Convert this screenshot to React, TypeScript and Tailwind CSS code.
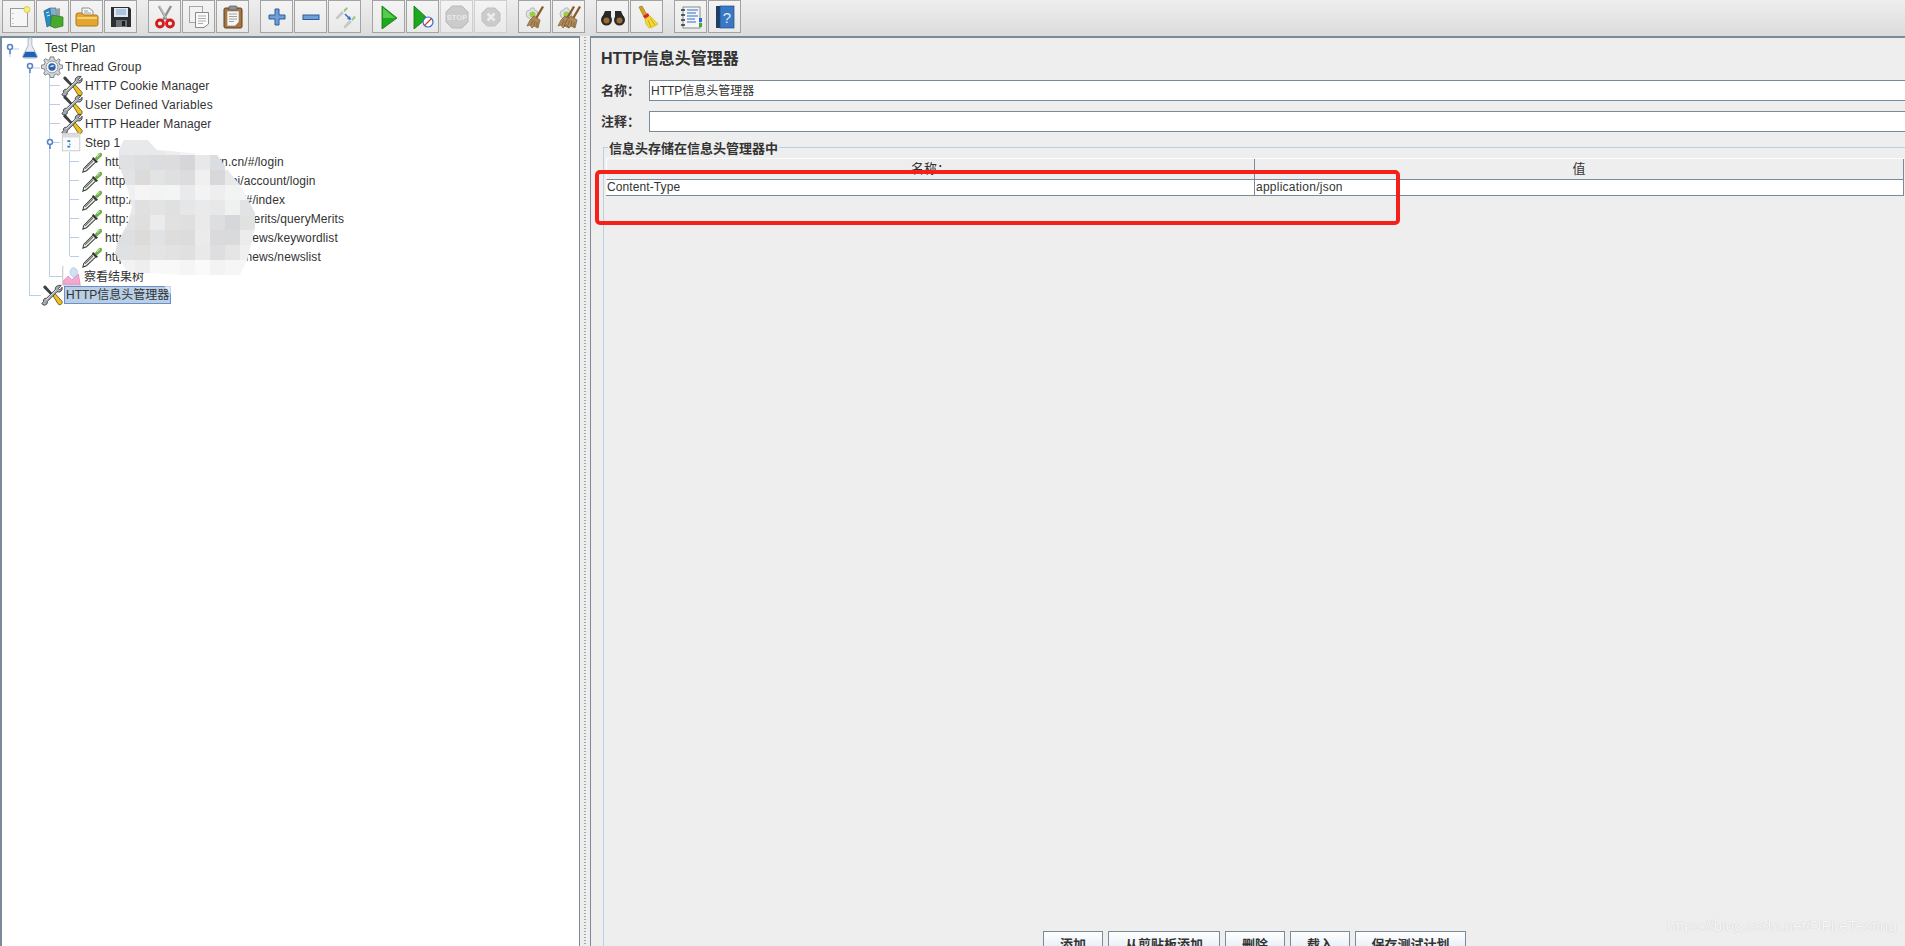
import type { ReactNode } from 'react';

const CJK = "font-['Liberation_Sans','Noto_Sans_CJK_SC',sans-serif]";

function Ic({ children, size = 24 }: { children: ReactNode; size?: number }) {
  return (
    <svg width={size} height={size} viewBox="0 0 24 24" className="block shrink-0">
      {children}
    </svg>
  );
}

// pipette, also used at small size in the tree
const dropper = (
  <>
    <path d="M2 23 L3 19 L13 9 L16 12 L6 21.5 Z" fill="#f0f2f0" stroke="#3a3f3a" strokeWidth="1.1" />
    <path d="M4.5 19.5 L13 11" stroke="#6d726d" strokeWidth="1.2" />
    <path d="M12 8 L17 13 L18.5 11.5 L13.5 6.5 Z" fill="#2f352c" />
    <path d="M15 8 L19 3 Q21 1 22.5 2.5 Q24 5 21 7 L17 10.5 Z" fill="#6fae4a" />
    <path d="M17.5 6.5 L20.5 3.2" stroke="#bfe0a2" strokeWidth="1.2" />
  </>
);

const wrench = (
  <>
    <path d="M3 2 L5 1.5 L13 10.5 L11 12.5 L2.5 4 Z" fill="#3c4043" />
    <path d="M12 11 L14.5 9.5 L23 19 Q23.5 21.5 21.5 22.5 Q19.5 23 18.5 21.5 Z" fill="#f0c11d" stroke="#5f4c10" strokeWidth="0.9" />
    <path d="M22 1.5 L19 5 L20.5 6.5 L23 3.5 Q23.8 7 21 8.5 Q19 9 17.5 8.5 L7 19 Q7.5 22 4.5 23 Q2 23.5 1 21.5 Q1 20.5 3 19 L2.5 17.5 Q3.5 15 6 15.5 L15.5 6.5 Q15 4 17 2.5 Q19 1 22 1.5 Z" fill="#a5abaf" stroke="#2e3235" strokeWidth="0.9" />
    <path d="M5.5 17.5 L16.5 6.5" stroke="#eceef0" strokeWidth="0.9" />
  </>
);

const gear = (
  <>
    <path d="M12 1 L14 1 L14.5 4 L17 5 L19.5 3 L21 4.5 L19.5 7 L20.5 9.5 L23.5 10 L23.5 13.5 L20.5 14 L19.5 16.5 L21 19 L19 21 L16.5 19.5 L14.5 20.5 L14 23.5 L10 23.5 L9.5 20.5 L7 19.5 L4.5 21 L3 19 L4.5 16.5 L3.5 14 L0.5 13.5 L0.5 10 L3.5 9.5 L4.5 7 L3 4.5 L5 3 L7.5 4.5 L9.5 4 L10 1 Z" fill="#d5d8dc" stroke="#73797f" strokeWidth="1" />
    <circle cx="12" cy="12" r="6.5" fill="#f2f3f5" stroke="#8c9298" />
    <circle cx="12" cy="12" r="4" fill="#2f62a6" />
    <path d="M9.5 12 Q12 8 15 11 L12 12 Z" fill="#cfe0f5" />
  </>
);

const broom = (
  <>
    <path d="M19 1 L21 2 L14 14 L12 13 Z" fill="#8a5a2b" />
    <path d="M11 11 L17 15 L15 23 L11 21 L9 23 L7 20 L4 21 L7 15 Z" fill="#b08a5a" stroke="#7d5c34" strokeWidth="0.7" />
    <path d="M10 15 L8 20 M12 16 L11 21 M14 17 L14 22" stroke="#7d5c34" strokeWidth="0.8" />
  </>
);

const smallGear = (
  <>
    <path d="M8 3 L11 3 L11.5 5 L14 6 L15 9 L14 12 L11.5 13.5 L11 15 L8 15 L7 13.5 L4 12 L3 9 L4 6 L7 5 Z" fill="#dfe1e3" stroke="#b5b8bb" strokeWidth="1" />
    <circle cx="9.5" cy="9.5" r="3" fill="#9ccb45" />
  </>
);

const toolbarIcons: { x: ReactNode; off?: boolean; gap?: boolean }[] = [
  {
    x: (
      <Ic>
        <rect x="3.5" y="3.5" width="17" height="18" fill="#f6f6f6" stroke="#9a9a9a" />
        <path d="M6 8 V9 M6 13 V14 M6 18 V19" stroke="#999" />
        <circle cx="20" cy="4.5" r="3" fill="#f4ee8a" stroke="#e0cf3c" />
      </Ic>
    ),
  },
  {
    x: (
      <Ic>
        <path d="M3 6 L9 3 L11 19 L6 22 Z" fill="#2a8ac8" stroke="#155a8a" strokeWidth="0.7" />
        <path d="M9 3 L15 3 L16 17 L11 19 Z" fill="#7fb0d0" stroke="#4a6e88" strokeWidth="0.7" />
        <path d="M15 4 L19 3 L19 16 L16 17 Z" fill="#999ea3" />
        <path d="M9 21 L11 10 L22 12 L22 21 L14 23 Z" fill="#47a92e" stroke="#2a7a1a" strokeWidth="0.7" />
        <path d="M5 8 L8 7 M6 11 L9 10" stroke="#d0ecff" />
      </Ic>
    ),
  },
  {
    x: (
      <Ic>
        <path d="M7 11 V3 H14 L18 6 V11 Z" fill="#f4f4f4" stroke="#909090" />
        <path d="M9 6 H13 M9 8 H16" stroke="#a0a0a0" />
        <path d="M1 10 Q1 8 3 8 H7 L9 10 H21 Q23 10 23 12 V19 Q23 21 21 21 H3 Q1 21 1 19 Z" fill="#e3a72f" stroke="#ab7a1a" />
        <path d="M2 13 H22" stroke="#f6d277" strokeWidth="2" />
      </Ic>
    ),
  },
  {
    x: (
      <Ic>
        <path d="M2 2 H20 L22 4 V22 H2 Z" fill="#2b2f33" />
        <rect x="5" y="3" width="14" height="9" fill="#dfe8f2" />
        <path d="M7 5 H17 M7 7 H17 M7 9 H17" stroke="#7f9fc4" />
        <rect x="7" y="15" width="11" height="7" fill="#6b7075" />
        <rect x="13" y="16" width="3" height="5" fill="#1d1f22" />
      </Ic>
    ),
  },
  {
    gap: true,
    x: (
      <Ic>
        <path d="M6 1 L14 15 M18 1 L10 15" stroke="#8f8f8f" strokeWidth="2.4" />
        <path d="M6.5 1 L13 13" stroke="#e6e6e6" strokeWidth="0.8" />
        <circle cx="7" cy="18.5" r="3.5" fill="none" stroke="#d41a1a" strokeWidth="2.8" />
        <circle cx="17" cy="18.5" r="3.5" fill="none" stroke="#d41a1a" strokeWidth="2.8" />
      </Ic>
    ),
  },
  {
    x: (
      <Ic>
        <rect x="2.5" y="1.5" width="13" height="16" fill="#f2f2f2" stroke="#a5a5a5" />
        <path d="M8.5 7.5 H21.5 V19 L17 22.5 H8.5 Z" fill="#fafafa" stroke="#8a8a8a" />
        <path d="M11 11 H19 M11 13.5 H19 M11 16 H19 M11 18.5 H16" stroke="#adadad" />
      </Ic>
    ),
  },
  {
    x: (
      <Ic>
        <rect x="3" y="3" width="18" height="20" rx="1.5" fill="#a8763a" stroke="#5e3f1a" />
        <path d="M6 6 H18 V17 L14 21 H6 Z" fill="#f8f6f0" stroke="#8a8a8a" strokeWidth="0.7" />
        <rect x="8" y="1" width="8" height="4" rx="1" fill="#8f9396" stroke="#55585a" strokeWidth="0.7" />
        <path d="M8 9 H16 M8 11.5 H16 M8 14 H16 M8 16.5 H13" stroke="#a0a0a0" />
      </Ic>
    ),
  },
  {
    gap: true,
    x: (
      <Ic>
        <path d="M10 4 H14 V10 H20 V14 H14 V20 H10 V14 H4 V10 H10 Z" fill="#6f9fd8" stroke="#2e5c9a" />
      </Ic>
    ),
  },
  {
    x: (
      <Ic>
        <rect x="4" y="10" width="16" height="4.5" fill="#6f9fd8" stroke="#2e5c9a" />
      </Ic>
    ),
  },
  {
    x: (
      <Ic>
        <g transform="translate(0 0) scale(0.55) translate(4 2)">
          <path d="M3 23 L2 21 L12 10 L15 13 L4 23 Z" fill="#c9cdc9" stroke="#8a8f8a" strokeWidth="0.6" />
          <path d="M15 8 L19 3 Q21 1 22.5 3 Q24 5 21 7 L17 11 Z" fill="#9cc77f" />
        </g>
        <g transform="translate(10 10) scale(0.55)">
          <path d="M3 23 L2 21 L12 10 L15 13 L4 23 Z" fill="#c9cdc9" stroke="#8a8f8a" strokeWidth="0.6" />
          <path d="M15 8 L19 3 Q21 1 22.5 3 Q24 5 21 7 L17 11 Z" fill="#9cc77f" />
        </g>
        <path d="M12 9 L17 14" stroke="#2c6fd0" strokeWidth="1.5" />
        <path d="M18 15 L14 14 L17 11 Z" fill="#2c6fd0" />
      </Ic>
    ),
  },
  {
    gap: true,
    x: (
      <Ic>
        <path d="M5 1 L20 13 L5 24 Z" fill="#1ea81e" stroke="#0f700f" strokeWidth="0.8" />
        <path d="M6 3 L18 13 L6 13 Z" fill="#55cc4f" />
      </Ic>
    ),
  },
  {
    x: (
      <Ic>
        <path d="M3 1 L16 13 L3 24 Z" fill="#1ea81e" stroke="#0f700f" strokeWidth="0.8" />
        <circle cx="17" cy="17" r="5" fill="#ffffff" stroke="#2c6fd0" strokeWidth="1.2" />
        <path d="M13.5 20.5 L20.5 13.5" stroke="#e23030" strokeWidth="1.2" />
      </Ic>
    ),
  },
  {
    off: true,
    x: (
      <Ic>
        <path d="M7 1 H17 L23 7 V17 L17 23 H7 L1 17 V7 Z" fill="#c8c8c8" stroke="#b4b4b4" />
        <text x="12" y="15" textAnchor="middle" fontSize="7.5" fontWeight="700" fill="#e8e8e8" fontFamily="Liberation Sans, sans-serif">
          STOP
        </text>
      </Ic>
    ),
  },
  {
    off: true,
    x: (
      <Ic>
        <path d="M8 3 H16 L21 8 V16 L16 21 H8 L3 16 V8 Z" fill="#c8c8c8" stroke="#bcbcbc" />
        <path d="M8.5 8.5 L15.5 15.5 M15.5 8.5 L8.5 15.5" stroke="#ececec" strokeWidth="2.6" />
      </Ic>
    ),
  },
  {
    gap: true,
    x: (
      <Ic>
        {smallGear}
        {broom}
      </Ic>
    ),
  },
  {
    x: (
      <Ic>
        {smallGear}
        <g transform="translate(-3 0)">{broom}</g>
        <g transform="translate(3 0)">{broom}</g>
      </Ic>
    ),
  },
  {
    gap: true,
    x: (
      <Ic>
        <circle cx="5.5" cy="15" r="5.5" fill="#26282a" />
        <circle cx="18.5" cy="15" r="5.5" fill="#26282a" />
        <path d="M4 6 H10 V13 H14 V6 H20 L23 13 H1 Z" fill="#26282a" />
        <circle cx="5.5" cy="15.5" r="3" fill="#a06a34" />
        <circle cx="18.5" cy="15.5" r="3" fill="#a06a34" />
      </Ic>
    ),
  },
  {
    x: (
      <Ic>
        <path d="M4 2 L7 1 L12 10 L9 12 Z" fill="#d8a21e" stroke="#8f6c12" strokeWidth="0.6" />
        <path d="M8 11 L13 8 L14.5 11 L10 14 Z" fill="#d52a2a" />
        <path d="M10 14 L15 11 Q19 15 23 19 Q17 23 14 23 Q10 19 10 14 Z" fill="#f4da35" stroke="#c9a916" strokeWidth="0.6" />
        <path d="M13 15 L16 22 M15 13 L20 20" stroke="#c9a916" />
      </Ic>
    ),
  },
  {
    gap: true,
    x: (
      <Ic>
        <rect x="4" y="2" width="17" height="21" fill="#f5f5f5" stroke="#8a8a8a" />
        <path d="M2 5 H6 M2 10 H6 M2 15 H6 M2 20 H6" stroke="#2f3336" strokeWidth="1.6" />
        <path d="M8 5 H19 M8 8 H17 M8 11 H19 M8 14 H16 M8 17 H17" stroke="#2c6fd0" strokeWidth="1.2" />
        <rect x="20" y="13" width="3" height="4" fill="#2c6fd0" />
        <rect x="20" y="18" width="3" height="4" fill="#3fa83a" />
      </Ic>
    ),
  },
  {
    x: (
      <Ic>
        <rect x="3" y="1" width="5" height="22" fill="#1f3f66" />
        <rect x="7" y="1" width="14" height="22" fill="#3a78c4" stroke="#1f4a82" strokeWidth="0.7" />
        <text x="14" y="18" textAnchor="middle" fontSize="15" fill="#dfeaf8" fontFamily="Liberation Sans, sans-serif">
          ?
        </text>
      </Ic>
    ),
  },
];

const flask = (
  <Ic size={22}>
    <path d="M10 1 H14 V9 L20 21 Q20 23 18 23 H6 Q4 23 4 21 L10 9 Z" fill="#e8ecf2" stroke="#a9b0ba" />
    <path d="M7 16 H17 L20 22 H4 Z" fill="#1e62b8" />
  </Ic>
);
const stepIcon = (
  <Ic size={22}>
    <rect x="1.5" y="1.5" width="19" height="19" fill="#fbfbfb" stroke="#c8c8c8" />
    <rect x="2" y="2" width="18" height="4" fill="#dcdcdc" />
    <path d="M7 9 H10 V11 H7 Z M7 15 H10 V17 H7 Z" fill="#2a78d0" />
    <path d="M9 12 L11 14 L9 14 Z" fill="#2a78d0" />
  </Ic>
);
const graph = (
  <Ic size={22}>
    <path d="M3 1 V22 H23" fill="none" stroke="#bdbdbd" />
    <path d="M4 21 L4 17 L9 12 L13 16 L20 10 L22 21 Z" fill="#f3a8d2" stroke="#df6fb0" strokeWidth="0.7" />
    <ellipse cx="15" cy="8" rx="4" ry="5" fill="#cfe2f5" stroke="#9cbfe0" strokeWidth="0.7" />
  </Ic>
);

const sampler = <Ic size={22}>{dropper}</Ic>;
const tool = <Ic size={22}>{wrench}</Ic>;

const tree = [
  { label: 'Test Plan', row: 'pl-[17px] gap-[4px] tracking-[0.1px]', icon: flask },
  { label: 'Thread Group', row: 'pl-[39px] gap-[2px] tracking-[0.15px]', icon: <Ic size={22}>{gear}</Ic> },
  { label: 'HTTP Cookie Manager', row: 'pl-[59px] gap-[2px] tracking-[0.1px]', icon: tool },
  { label: 'User Defined Variables', row: 'pl-[59px] gap-[2px] tracking-[0.25px]', icon: tool },
  { label: 'HTTP Header Manager', row: 'pl-[59px] gap-[2px] tracking-[0.1px]', icon: tool },
  { label: 'Step 1', row: 'pl-[59px] gap-[2px] tracking-[0.1px]', icon: stepIcon },
  { label: 'http://xxxxxxxxxxxxxxn.cn/#/login', row: 'pl-[79px] gap-[2px] tracking-[0.1px]', icon: sampler },
  { label: 'http://xxxxxxxxxxxxxxiapi/account/login', row: 'pl-[79px] gap-[2px] tracking-[0.1px]', icon: sampler },
  { label: 'http://xxxxxxxxxxxxxxxxxi/#/index', row: 'pl-[79px] gap-[2px] tracking-[0.1px]', icon: sampler },
  { label: 'http://xxxxxxxxxxxxxxxxxrmerits/queryMerits', row: 'pl-[79px] gap-[2px] tracking-[0.1px]', icon: sampler },
  { label: 'http://xxxxxxxxxxxxxxxxxxnews/keywordlist', row: 'pl-[79px] gap-[2px] tracking-[0.1px]', icon: sampler },
  { label: 'http://xxxxxxxxxxxxxxxxxxnews/newslist', row: 'pl-[79px] gap-[2px] tracking-[0.1px]', icon: sampler },
];

// tree guides, in page coordinates
function TreeGuides() {
  const handles = [
    [10, 49],
    [30, 68],
    [50, 144],
  ];
  const h = [
    [13, 19, 49],
    [33, 40, 68],
    [49, 60, 85.5],
    [49, 60, 104.5],
    [49, 60, 123.5],
    [53, 60, 142.5],
    [70, 79, 161.5],
    [70, 79, 180.5],
    [70, 79, 199.5],
    [70, 79, 218.5],
    [70, 79, 237.5],
    [70, 79, 256.5],
    [49, 62, 276.5],
    [29, 41, 295.5],
  ];
  return (
    <svg width="577" height="320" className="absolute left-0 top-0 pointer-events-none">
      <g transform="translate(-2 -38)">
        <path d="M29.5 72 V295 M49.5 76 V276 M69.5 152 V256 M10 53 V57" stroke="#b8cfe5" fill="none" />
        {h.map(([a, b, y]) => (
          <path key={`${a}-${y}`} d={`M${a} ${y} H${b}`} stroke="#b8cfe5" />
        ))}
        {handles.map(([x, y]) => (
          <g key={y}>
            <circle cx={x} cy={y - 2} r="2.5" fill="#fff" stroke="#5b84c4" strokeWidth="1.6" />
            <path d={`M${x} ${y} V${y + 5}`} stroke="#5b84c4" strokeWidth="1.6" />
          </g>
        ))}
      </g>
    </svg>
  );
}

// the pixelated patch that hides the hosts
const mosaic = [
  ['#e8e9eb', '#e8e9eb', '#e8e9eb', '#eeeeee', '#f4f4f4', '#ffffff', '#ffffff', '#ffffff', '#ffffff'],
  ['#dfe1e3', '#dcdee0', '#dbdcdf', '#dcdcde', '#d5d5da', '#e7e8e9', '#dcdde0', '#ffffff', '#ffffff'],
  ['#e1e3e5', '#dcdbd9', '#e2e3e5', '#e0dfdf', '#dcdcdf', '#f0f0f0', '#d8d8db', '#e8e8e8', '#ffffff'],
  ['#eef0f1', '#f5f5f5', '#f2f3f3', '#f3f4f4', '#e9eaeb', '#f3f3f3', '#eeeeee', '#f2f3f3', '#f4f4f4'],
  ['#e8e9ea', '#e0e0e0', '#e3e3e3', '#e0e0e0', '#e5e6e8', '#e9eaeb', '#e8e8e9', '#eff0f0', '#e2e3e5'],
  ['#e2e3e5', '#dfdfdf', '#eaebec', '#e2e1e1', '#e0dfdf', '#eaeaea', '#dddee0', '#d6d7da', '#e1e1e0'],
  ['#dde0e2', '#dddbda', '#e1e2e3', '#dfdcdc', '#dcdcdc', '#ebebeb', '#dadadc', '#d9dadc', '#ececec'],
  ['#dfe1e3', '#e0e0df', '#e4e4e4', '#e2e2e2', '#e0e0e0', '#e9e9e9', '#dedee0', '#e5e5e6', '#f0f0f0'],
  ['#f2f2f2', '#eeeeee', '#f8f8f8', '#f8f8f8', '#f5f5f5', '#fafafa', '#f3f3f3', '#f6f6f6', '#f6f6f6'],
];

function Mosaic() {
  return (
    <svg width="160" height="175" viewBox="115 135 160 175" className="absolute left-[113px] top-[97px]">
      <defs>
        <clipPath id="patch">
          <path d="M119 150 L126 135 L143 135 L157 150 L217 155 L230 173 L240 185 L255 213 L255 227 L251 245 L247 260 L240 275 L182 275 L128 272 L115 253 L117 243 L128 223 L132 207 L127 187 L119 165 Z" />
        </clipPath>
      </defs>
      <g clipPath="url(#patch)">
        {mosaic.map((row, r) =>
          row.map((c, i) => <rect key={`${r}-${i}`} x={120 + i * 15 - (i === 0 ? 5 : 0)} y={140 + r * 15} width={i === 0 ? 20 : 15} height="15" fill={c} />),
        )}
      </g>
      <path d="M155 275 L180 305 L180 275 Z" fill="#ffffff" opacity="0.6" />
    </svg>
  );
}

function ToolbarButton({ off, children }: { off?: boolean; children: ReactNode }) {
  return (
    <div
      className={`flex h-[33px] w-[33px] items-center justify-center border bg-gradient-to-b from-[#f4f4f4] to-[#e9e9e9] ${
        off ? 'border-[#cfcfcf]' : 'border-[#a3a3a3]'
      }`}
    >
      <div className={off ? 'opacity-90' : ''}>{children}</div>
    </div>
  );
}

function Field({ label, value }: { label: string; value?: string }) {
  return (
    <div className="flex h-[21px] items-center">
      <span className="w-[48px] text-[13px] font-bold text-[#333]">{label}</span>
      <div className="flex h-[21px] flex-1 items-center border-b border-l border-t border-[#7a8a99] bg-white pl-[1px] text-[12px] text-[#333]">
        {value}
      </div>
    </div>
  );
}

const bottomButtons = [
  { t: '添加', w: 'w-[60px]' },
  { t: '从剪贴板添加', w: 'w-[112px]' },
  { t: '删除', w: 'w-[60px]' },
  { t: '载入', w: 'w-[60px]' },
  { t: '保存测试计划', w: 'w-[111px]' },
];

export default function App() {
  return (
    <div className={`relative flex h-[946px] w-[1905px] flex-col overflow-hidden bg-[#eeeeee] text-[12px] ${CJK}`}>
      {/* Toolbar */}
      <div className="flex h-[36px] shrink-0 items-start bg-gradient-to-b from-[#eeeeee] to-[#dcdcdc] pl-[2px]">
        {toolbarIcons.map((b, i) => (
          <div key={i} className={b.gap ? 'ml-[11px]' : i === 0 ? '' : 'ml-[1px]'}>
            <ToolbarButton off={b.off}>{b.x}</ToolbarButton>
          </div>
        ))}
      </div>

      <div className="flex min-h-0 flex-1">
        {/* Tree */}
        <div className="relative w-[580px] shrink-0 border-l-2 border-r border-t-2 border-[#7a8a99] bg-white">
          <TreeGuides />
          <div className="relative">
            {tree.map((r) => (
              <div key={r.label} className={`flex h-[19px] items-center text-[#333] ${r.row}`}>
                {r.icon}
                <span className="whitespace-nowrap">{r.label}</span>
              </div>
            ))}
            <div className="flex h-[19px] items-center gap-[2px] pl-[58px] text-[#333]">
              {graph}
              <span className="whitespace-nowrap pt-[2px]">察看结果树</span>
            </div>
            <div className="flex h-[19px] items-center gap-[1px] pl-[39px] text-[#333]">
              <Ic size={22}>{wrench}</Ic>
              <span className="flex h-[18px] w-[107px] items-center whitespace-nowrap border border-[#6d8fc9] bg-[#b8cfe5] pl-[1px] pt-[1px]">
                HTTP信息头管理器
              </span>
            </div>
          </div>
          <Mosaic />
        </div>

        {/* Split bar */}
        <div className="flex w-[10px] shrink-0 justify-center bg-[#eeeeee]">
          <div className="h-full w-[2px] bg-[radial-gradient(circle,#9aa5b0_0.6px,transparent_0.8px)] bg-[length:2px_3px]" />
        </div>

        {/* Header manager panel */}
        <div className="flex min-w-0 flex-1 flex-col border-l border-t-2 border-[#7a8a99] pl-[10px]">
          <div className="mb-[11px] mt-[11px] h-[20px] text-[16px] font-bold leading-[20px] text-[#333]">HTTP信息头管理器</div>
          <div className="flex flex-col gap-[10px]">
            <Field label="名称：" value="HTTP信息头管理器" />
            <Field label="注释：" />
          </div>

          {/* Group box */}
          <div className="relative ml-[2px] mt-[15px] flex min-h-0 flex-1 flex-col border-l border-t border-[#b8cfe5] pl-[2px] pt-[10px]">
            <span className="absolute left-[4px] top-[-8px] bg-[#eeeeee] px-[1px] text-[13px] font-bold leading-[17px] text-[#333]">
              信息头存储在信息头管理器中
            </span>
            <div className="flex-1">
              <div className="mr-[1px] flex h-[22px] border-t border-white bg-[#eeeeee] text-[13px] text-[#333]">
                <div className="flex w-[649px] items-center justify-center border-b border-l border-r border-b-[#7a8a99] border-l-white border-r-[#7a8a99]">
                  名称：
                </div>
                <div className="flex flex-1 items-center justify-center border-b border-r border-[#7a8a99]">值</div>
              </div>
              <div className="mr-[1px] flex h-[16px] border-b border-r border-[#7a8a99] bg-white text-[#333]">
                <div className="flex w-[649px] items-center border-r border-[#7a8a99] pb-[2px] pl-[1px] tracking-[0.1px]">Content-Type</div>
                <div className="flex flex-1 items-center pb-[2px] pl-[1px] tracking-[0.25px]">application/json</div>
              </div>
            </div>
            <div className="flex h-[15px] shrink-0 items-start justify-center gap-[5px] overflow-hidden pr-[2px]">
              {bottomButtons.map((b) => (
                <div
                  key={b.t}
                  className={`flex h-[27px] shrink-0 items-center justify-center border border-[#7a8a99] bg-gradient-to-b from-[#ffffff] to-[#dbe6f3] text-[13px] font-bold text-[#333] ${b.w}`}
                >
                  {b.t}
                </div>
              ))}
            </div>
          </div>
        </div>
      </div>

      {/* Red annotation around the row */}
      <div className="absolute left-[595px] top-[170px] h-[55px] w-[805px] rounded-[5px] border-4 border-[#f5201a]" />

      {/* Blog watermark */}
      <div className="absolute bottom-[9px] right-[8px] text-[15.5px] text-[#f7f7f7] [text-shadow:0_0_1px_#bdbdbd]">
        https://blog.csdn.net/DFireTesting
      </div>
    </div>
  );
}
